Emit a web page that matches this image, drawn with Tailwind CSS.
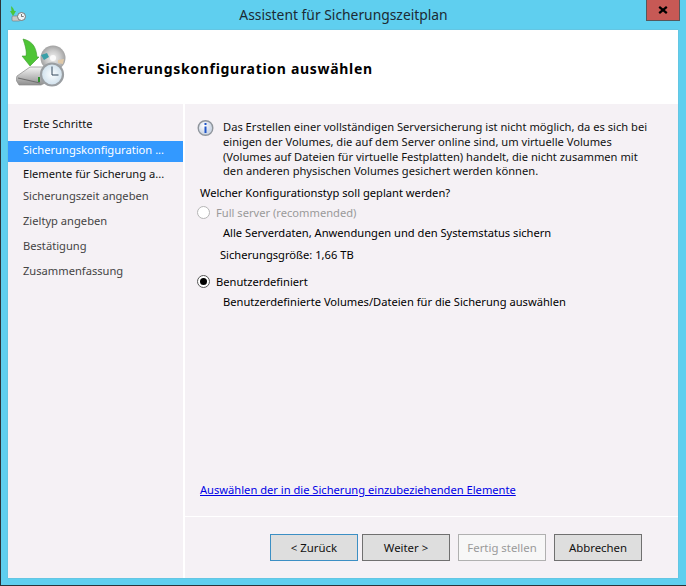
<!DOCTYPE html>
<html lang="de"><head><meta charset="utf-8"><script src="https://cdn.jsdelivr.net/npm/@tailwindcss/browser@4"></script></head>
<body class="m-0 bg-[#5fcfef]">
<div class="relative w-[686px] h-[586px] overflow-hidden flex flex-col bg-[#5fcfef] border-l border-b border-[#2c3338] font-['Noto_Sans',sans-serif] text-[11.15px] leading-[15px] text-black">
  <div class="relative h-[30px] shrink-0">
    <svg class="absolute left-[8px] top-[5px]" width="19" height="17" viewBox="0 0 19 17"><path d="M2 1l2 2 1.500 3 1.500 0-2 3.500-1 1.500-3-5 1.500 0z" fill="#4cc53a"/><rect x="3" y="11" width="8" height="5" rx="1" fill="#c9c9c9" stroke="#777" stroke-width=".6"/><circle cx="12.500" cy="11.500" r="4" fill="#eef3f6" stroke="#777"/><path d="M12.500 9v2.500h2.200" fill="none" stroke="#444" stroke-width=".7"/></svg>
    <div class="absolute left-0 right-0 top-[6px] text-center text-[13.85px] leading-[18px] text-[#1c2a33]">Assistent für Sicherungszeitplan</div>
    <div class="absolute left-[645px] top-0 w-[34px] h-[21px] bg-[#c75955] border border-t-0 border-[#55585c] flex items-center justify-center">
      <svg width="10" height="8" viewBox="0 0 10 8"><path d="M1.200 .8l7.600 6.400M8.800 .8L1.200 7.200" stroke="#000" stroke-width="2.200" fill="none"/></svg>
    </div>
  </div>
  <div class="ml-[7px] w-[670px] h-[548px] flex flex-col bg-white shadow-[0_0_1px_#7a9aaa]">
    <div class="h-[74px] shrink-0 bg-white relative">
      <svg class="absolute left-[8px] top-[6px]" width="56" height="56" viewBox="16 36 56 56">
        <defs><linearGradient id="g" x1="0" y1="0" x2="0" y2="1"><stop offset="0" stop-color="#f4f4f4"/><stop offset="1" stop-color="#8f8f8f"/></linearGradient><radialGradient id="d"><stop offset="0" stop-color="#f2f2f2"/><stop offset=".6" stop-color="#c9c9c9"/><stop offset="1" stop-color="#a2a2a2"/></radialGradient><radialGradient id="c" cx=".5" cy=".5"><stop offset="0" stop-color="#fbfdff"/><stop offset="1" stop-color="#cfe0ec"/></radialGradient></defs>
        <circle cx="53" cy="58" r="12.500" fill="url(#d)"/><circle cx="53" cy="58" r="3" fill="#fafafa"/><path d="M41 55l6-2 2 4-5 3z" fill="#3aa0a8"/><path d="M58 60l6-1-1 5-5-1z" fill="#e0c9a8"/>
        <path d="M17 76l13-9h17l8 5v6l-14 7H19l-3-5z" fill="url(#g)" stroke="#8b8b8b" stroke-width=".7"/>
        <path d="M18 78l22 5" stroke="#6f6f6f" stroke-width="1.200"/>
        <path d="M23 39c8 2 13 6 14 18l2 0-9 9-8-10 4 0c1-5-1-11-3-17z" fill="#4ec536" stroke="#3c9b2c" stroke-width=".6"/>
        <circle cx="52" cy="74.500" r="11" fill="url(#c)" stroke="#9a9ea2" stroke-width="2.200"/>
        <path d="M52 66.500v8.500h6.500" fill="none" stroke="#33465a" stroke-width="1"/>
        <rect x="38" y="77" width="2" height="5" fill="#2f8f2f"/>
      </svg>
      <div class="absolute left-[89px] top-[30px] text-[14px] leading-[18px] font-bold tracking-[0.7px] text-black whitespace-nowrap">Sicherungskonfiguration auswählen</div>
    </div>
    <div class="flex-1 flex gap-[2px] min-h-0">
      <nav class="w-[175px] shrink-0 bg-[#f5f1f5] pt-[12px] flex flex-col whitespace-nowrap">
        <div class="h-[25px] pl-[15px] text-[#111]">Erste Schritte</div>
        <div class="h-[21px] pl-[15px] pt-[1px] bg-[#3399ff] text-white">Sicherungskonfiguration ...</div>
        <div class="h-[25px] pl-[15px] pt-[4px] text-[#111]">Elemente für Sicherung a...</div>
        <div class="h-[25px] pl-[15px] pt-[1px] text-[#444]">Sicherungszeit angeben</div>
        <div class="h-[25px] pl-[15px] pt-[1px] text-[#444]">Zieltyp angeben</div>
        <div class="h-[25px] pl-[15px] pt-[1px] text-[#444]">Bestätigung</div>
        <div class="h-[25px] pl-[15px] pt-[1px] text-[#444]">Zusammenfassung</div>
      </nav>
      <main class="flex-1 flex flex-col">
        <div class="h-[412px] shrink-0 bg-[#f5f1f5] relative whitespace-nowrap">
          <div class="flex pt-[16px] pl-[12px] gap-[9px]">
            <svg class="shrink-0 mt-[-1px]" width="17" height="18" viewBox="0 0 17 18"><defs><radialGradient id="i" cx=".4" cy=".35"><stop offset="0" stop-color="#fff"/><stop offset="1" stop-color="#cfd8e6"/></radialGradient></defs><circle cx="8.500" cy="9" r="7.300" fill="url(#i)" stroke="#8f959c" stroke-width="1.400"/><rect x="7.500" y="4" width="2" height="2" fill="#1f55c8"/><rect x="7.500" y="7.500" width="2" height="6.500" fill="#1f55c8"/></svg>
            <div class="text-[#111] leading-[14.8px]">Das Erstellen einer vollständigen Serversicherung ist nicht möglich, da es sich bei<br>einigen der Volumes, die auf dem Server online sind, um virtuelle Volumes<br>(Volumes auf Dateien für virtuelle Festplatten) handelt, die nicht zusammen mit<br>den anderen physischen Volumes gesichert werden können.</div>
          </div>
          <div class="ml-[15px] mt-[6px]">Welcher Konfigurationstyp soll geplant werden?</div>
          <div class="flex items-center gap-[6px] ml-[12px] mt-[5px] text-[#9a9a9a]">
            <span class="w-[13px] h-[13px] rounded-full border border-[#b5b5b5] bg-white"></span><span>Full server (recommended)</span>
          </div>
          <div class="ml-[38px] mt-[5px]">Alle Serverdaten, Anwendungen und den Systemstatus sichern</div>
          <div class="ml-[35px] mt-[7px]">Sicherungsgröße: 1,66 TB</div>
          <div class="flex items-center gap-[6px] ml-[12px] mt-[12px]">
            <span class="w-[13px] h-[13px] rounded-full border border-[#555] bg-white flex items-center justify-center"><span class="w-[7px] h-[7px] rounded-full bg-black"></span></span><span>Benutzerdefiniert</span>
          </div>
          <div class="ml-[38px] mt-[5px]">Benutzerdefinierte Volumes/Dateien für die Sicherung auswählen</div>
          <a class="absolute left-[15px] top-[378px] text-[#0000e6] underline">Auswählen der in die Sicherung einzubeziehenden Elemente</a>
        </div>
        <div class="h-[1px] shrink-0"></div>
        <div class="flex-1 bg-[#f5f1f5] flex items-start pl-[85px] pt-[17px] gap-[4px] text-[11.4px]">
          <button class="w-[88px] h-[27px] bg-[#dedede] border border-[#3c8fc4] text-[#111]">&lt; Zurück</button>
          <button class="w-[88px] h-[27px] bg-[#dedede] border border-[#707070] text-[#111]">Weiter &gt;</button>
          <button class="ml-[4px] w-[88px] h-[27px] bg-[#f7f7f7] border border-[#b0b0b0] text-[#9a9a9a]">Fertig stellen</button>
          <button class="ml-[4px] w-[88px] h-[27px] bg-[#dedede] border border-[#707070] text-[#111]">Abbrechen</button>
        </div>
      </main>
    </div>
  </div>
</div>
</body></html>
